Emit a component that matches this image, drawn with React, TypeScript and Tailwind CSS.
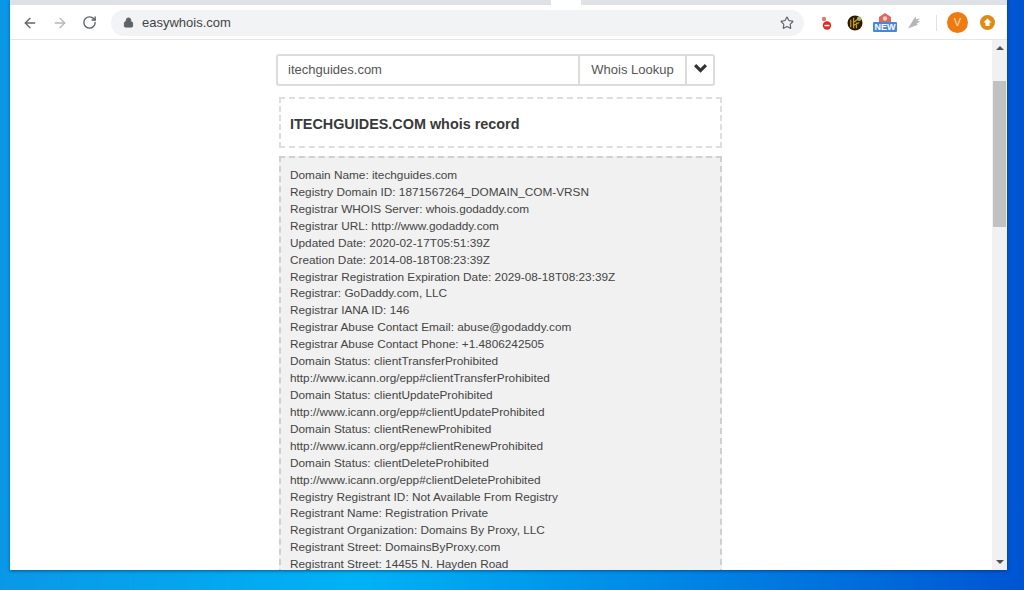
import { ArrowLeft, ArrowRight, RotateCw, Lock, Star } from "lucide-react";

const whoisLines = [
  "Domain Name: itechguides.com",
  "Registry Domain ID: 1871567264_DOMAIN_COM-VRSN",
  "Registrar WHOIS Server: whois.godaddy.com",
  "Registrar URL: http://www.godaddy.com",
  "Updated Date: 2020-02-17T05:51:39Z",
  "Creation Date: 2014-08-18T08:23:39Z",
  "Registrar Registration Expiration Date: 2029-08-18T08:23:39Z",
  "Registrar: GoDaddy.com, LLC",
  "Registrar IANA ID: 146",
  "Registrar Abuse Contact Email: abuse@godaddy.com",
  "Registrar Abuse Contact Phone: +1.4806242505",
  "Domain Status: clientTransferProhibited",
  "http://www.icann.org/epp#clientTransferProhibited",
  "Domain Status: clientUpdateProhibited",
  "http://www.icann.org/epp#clientUpdateProhibited",
  "Domain Status: clientRenewProhibited",
  "http://www.icann.org/epp#clientRenewProhibited",
  "Domain Status: clientDeleteProhibited",
  "http://www.icann.org/epp#clientDeleteProhibited",
  "Registry Registrant ID: Not Available From Registry",
  "Registrant Name: Registration Private",
  "Registrant Organization: Domains By Proxy, LLC",
  "Registrant Street: DomainsByProxy.com",
  "Registrant Street: 14455 N. Hayden Road",
];

function Toolbar() {
  return (
    <div className="flex h-[35px] shrink-0 items-center border-b border-[#e4e6e9] bg-white pt-[1px]">
      <ArrowLeft className="ml-[12px] h-[16px] w-[16px] text-[#5f6368]" strokeWidth={2} />
      <ArrowRight className="ml-[14px] h-[16px] w-[16px] text-[#b5b8bc]" strokeWidth={2} />
      <RotateCw className="ml-[14px] h-[15px] w-[15px] text-[#5f6368]" strokeWidth={2.2} />
      <div className="ml-[14px] flex h-[26px] w-[693px] items-center rounded-full bg-[#f1f3f4] pl-[12px]">
        <Lock className="h-[11px] w-[11px] fill-[#5f6368] text-[#5f6368]" strokeWidth={2} />
        <span className="ml-[8px] text-[13px] text-[#444]">easywhois.com</span>
        <Star className="ml-auto mr-[10px] h-[14px] w-[14px] text-[#5f6368]" strokeWidth={2} />
      </div>
      <svg className="ml-[15px] h-[16px] w-[14px]" viewBox="0 0 14 16">
        <circle cx="5" cy="4" r="2.2" fill="#d9534f" opacity="0.8" />
        <circle cx="8" cy="10.5" r="4.2" fill="#dd2c22" />
        <rect x="5.5" y="9.8" width="5" height="1.5" fill="#fff" />
      </svg>
      <svg className="ml-[14px] h-[16px] w-[16px]" viewBox="0 0 17 17">
        <circle cx="8.5" cy="8.5" r="8" fill="#2b1d05" />
        <path d="M4 5v8M7 3v11M7 8l5-4M7 11l6-3M10 8v6" stroke="#c99a16" strokeWidth="1.3" fill="none" />
        <circle cx="13" cy="4" r="2.4" fill="#a5b56b" />
      </svg>
      <div className="ml-[10px] flex w-[24px] flex-col items-center">
        <svg className="h-[9px] w-[14px]" viewBox="0 0 14 9">
          <path d="M1 9V4l6-4 6 4v5z" fill="#d9695f" />
          <circle cx="7" cy="5.5" r="2.2" fill="#f3c9c2" />
        </svg>
        <span className="flex h-[10px] w-[24px] items-center justify-center rounded-[1px] bg-[#4a86d8] text-[9px] font-bold leading-none text-white">
          NEW
        </span>
      </div>
      <svg className="ml-[10px] h-[15px] w-[14px]" viewBox="0 0 15 15">
        <path d="M1 14L9 1l1 3 4-1-3 3 3 0-4 3 2 1-6 2z" fill="#b4b7ba" />
      </svg>
      <div className="ml-[15px] h-[16px] w-px bg-[#dfe1e5]" />
      <div className="ml-[10px] flex h-[21px] w-[21px] items-center justify-center rounded-full bg-[#ef7a10] text-[11px] text-[#ffe2c8]">
        V
      </div>
      <svg className="ml-[12px] h-[15px] w-[15px]" viewBox="0 0 15 15">
        <circle cx="7.5" cy="7.5" r="7.5" fill="#e08a12" />
        <path d="M7.5 3.5l4 4H9.5V11h-4V7.5H3.5z" fill="#fff" />
      </svg>
    </div>
  );
}

function SearchBar() {
  return (
    <div className="ml-[266px] flex h-[32px] w-[439px] rounded-[3px] border-2 border-[#dcdcdc] bg-white text-[13px] text-[#555]">
      <div className="flex w-[300px] items-center pl-[10px]">itechguides.com</div>
      <div className="flex w-[107px] items-center justify-center border-l-2 border-[#dcdcdc]">Whois Lookup</div>
      <div className="flex flex-1 items-center justify-center border-l-2 border-[#dcdcdc]">
        <svg className="mb-[3px] h-[9px] w-[13px]" viewBox="0 0 13 9">
          <path d="M0 2.2L2.2 0l4.3 4.3L10.8 0 13 2.2 6.5 8.7z" fill="#333" />
        </svg>
      </div>
    </div>
  );
}

function Scrollbar() {
  return (
    <div className="flex w-[15px] shrink-0 flex-col items-center bg-[#f1f1f1]">
      <div className="mt-[6px] h-0 w-0 border-x-[4px] border-b-[4px] border-x-transparent border-b-[#505050]" />
      <div className="mt-[31px] h-[146px] w-[13px] bg-[#c1c1c1]" />
      <div className="mb-[6px] mt-auto h-0 w-0 border-x-[4px] border-t-[4px] border-x-transparent border-t-[#505050]" />
    </div>
  );
}

export default function App() {
  return (
    <div className="h-[590px] w-[1024px] overflow-hidden bg-gradient-to-r from-[#0a98e6] via-[#00b2f5] via-[35%] to-[#0054d2] pb-[20px] pl-[10px] pr-[17px] font-['Liberation_Sans',Arial,sans-serif]">
      <div className="flex h-[570px] flex-col bg-white shadow-[0_1px_3px_rgba(0,40,90,0.6)]">
        {/* tab strip */}
        <div className="flex h-[5px] shrink-0 bg-[#dee1e6]">
          <div className="ml-[541px] w-[30px] bg-white" />
        </div>
        <Toolbar />
        <div className="flex min-h-0 flex-1">
          <main className="min-w-0 flex-1 overflow-hidden pt-[14px]">
            <SearchBar />
            <div className="ml-[269px] mt-[11px] flex h-[51px] w-[443px] items-center border-2 border-dashed border-[#dedede] pl-[9px] pt-[5px] text-[14.4px] font-bold text-[#3a3a3a]">
              ITECHGUIDES.COM whois record
            </div>
            <div className="ml-[269px] mt-[8px] w-[443px] border-2 border-dashed border-[#d0d0d0] bg-[#f1f1f1] pl-[9px] pt-[9px] text-[11.8px] leading-[16.92px] text-[#444]">
              {whoisLines.map((line) => (
                <div key={line}>{line}</div>
              ))}
            </div>
          </main>
          <Scrollbar />
        </div>
      </div>
    </div>
  );
}
